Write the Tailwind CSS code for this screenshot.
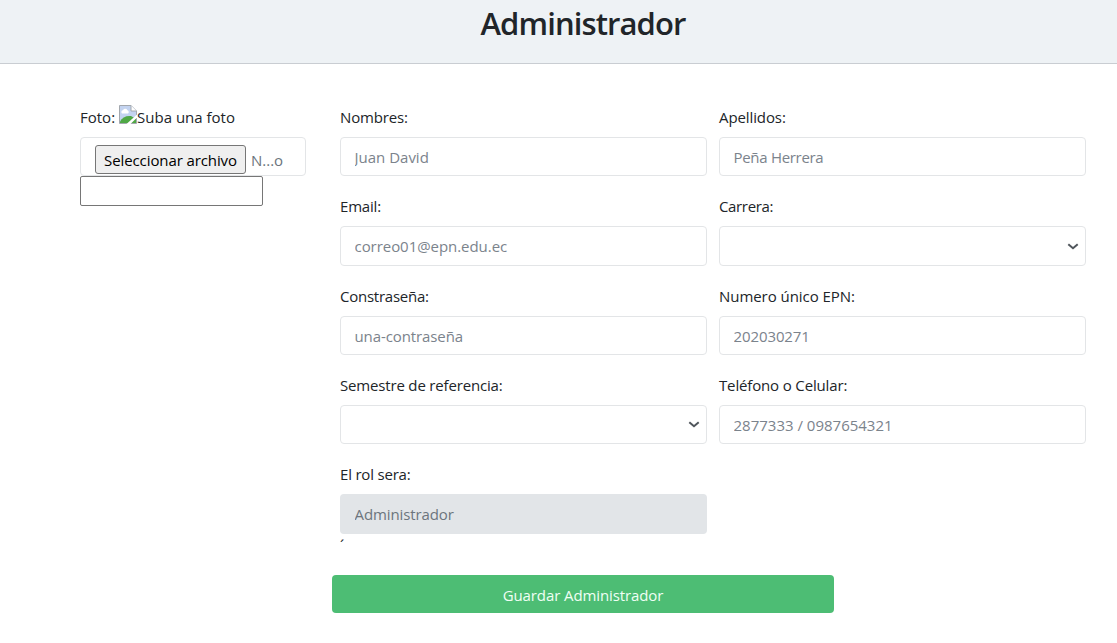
<!DOCTYPE html>
<html lang="es">
<head>
<meta charset="utf-8">
<title>Administrador</title>
<script src="https://cdn.jsdelivr.net/npm/@tailwindcss/browser@4"></script>
</head>
<body class="h-[643px] overflow-hidden bg-white font-['Open_Sans','Noto_Sans',sans-serif] text-[15px] leading-[23px] text-[#212529]">
<header class="flex h-16 justify-center border-b border-[#c9cdd2] bg-[#eef2f5] pl-[49px]">
  <h1 class="pt-[3px] text-[31px] leading-[40px] font-semibold tracking-[-0.9px]"><span>Administrador</span></h1>
</header>
<form>
  <div class="flex pt-[42px] pl-20">
    <section class="w-[226px] shrink-0">
      <div class="flex h-[31px]">
        <span class="mr-1">Foto:</span>
        <svg class="-mt-[1px] h-[19px] w-[18px]" viewBox="0 0 18 19">
          <path d="M.5 .5H12L17.500 6V18.500H.5Z" fill="#c3d3f0" stroke="#a3a8ae"/>
          <path d="M12 .5V6H17.500" fill="#fff" stroke="#a3a8ae"/>
          <path d="M3 8.500a1.800 1.800 0 0 1 1-3.200a2.400 2.400 0 0 1 4.400 0a1.800 1.800 0 0 1 .6 3.200Z" fill="#fff"/>
          <path d="M1 18V16.500C3 12.500 7 10.500 12 11L17 14V18Z" fill="#4fa845"/>
          <path d="M7.500 19L18 9.500V12.500L11.500 19Z" fill="#fff"/>
        </svg>
        <span>Suba una foto</span>
      </div>
      <div class="flex h-[39px] items-start rounded-[4px] border border-[#e3e5e7] pt-[7px] pl-[14px]">
        <button type="button" class="h-[29px] w-[151px] rounded-[3px] border border-[#767676] bg-[#efefef] pt-[2px] tracking-[-0.1px] whitespace-nowrap text-black">Seleccionar archivo</button>
        <span class="ml-[5px] pt-[4px] text-[#6c757d]">N...o</span>
      </div>
      <input type="text" class="block h-[30px] w-[183px] rounded-[2px] border border-[#767676]">
    </section>
    <section class="ml-[34px] grid w-[746px] auto-rows-[89.25px] grid-cols-2 gap-x-3">
      <label class="block"><span class="block h-[31px] tracking-[-0.15px]"><span>Nombres:</span></span>
        <input class="block h-[39.25px] w-full rounded-[4px] border border-[#e3e5e7] px-[13.5px] pt-[1px] placeholder:text-[#7b838c]" placeholder="Juan David"></label>
      <label class="block"><span class="block h-[31px] tracking-[-0.1px]"><span>Apellidos:</span></span>
        <input class="block h-[39.25px] w-full rounded-[4px] border border-[#e3e5e7] px-[13.5px] pt-[1px] tracking-[-0.3px] placeholder:text-[#7b838c]" placeholder="Peña Herrera"></label>
      <label class="block"><span class="block h-[31px] tracking-[-0.2px]"><span>Email:</span></span>
        <input class="block h-[39.25px] w-full rounded-[4px] border border-[#e3e5e7] px-[13.5px] pt-[1px] tracking-[-0.05px] placeholder:text-[#7b838c]" placeholder="correo01@epn.edu.ec"></label>
      <label class="block"><span class="block h-[31px] tracking-[-0.35px]"><span>Carrera:</span></span>
        <span class="flex h-[39.25px] items-center justify-end rounded-[4px] border border-[#e3e5e7] pt-px pr-[6px]"><svg class="h-[7px] w-[12px]" viewBox="0 0 12 7"><path d="M1.300 1.300L6 5.300L10.700 1.300" fill="none" stroke="#50565c" stroke-width="2"/></svg></span></label>
      <label class="block"><span class="block h-[31px] tracking-[-0.25px]"><span>Constraseña:</span></span>
        <input class="block h-[39.25px] w-full rounded-[4px] border border-[#e3e5e7] px-[13.5px] pt-[2px] tracking-[-0.1px] placeholder:text-[#7b838c]" placeholder="una-contraseña"></label>
      <label class="block"><span class="block h-[31px] tracking-[-0.05px]"><span>Numero único EPN:</span></span>
        <input class="block h-[39.25px] w-full rounded-[4px] border border-[#e3e5e7] px-[13.5px] pt-[2px] tracking-[-0.1px] placeholder:text-[#7b838c]" placeholder="202030271"></label>
      <label class="block"><span class="block h-[31px] tracking-[-0.17px]"><span>Semestre de referencia:</span></span>
        <span class="flex h-[39.25px] items-center justify-end rounded-[4px] border border-[#e3e5e7] pr-[6px]"><svg class="h-[7px] w-[12px]" viewBox="0 0 12 7"><path d="M1.300 1.300L6 5.300L10.700 1.300" fill="none" stroke="#50565c" stroke-width="2"/></svg></span></label>
      <label class="block"><span class="block h-[31px] tracking-[-0.15px]"><span>Teléfono o Celular:</span></span>
        <input class="block h-[39.25px] w-full rounded-[4px] border border-[#e3e5e7] px-[13.5px] pt-[2px] placeholder:text-[#7b838c]" placeholder="2877333 / 0987654321"></label>
      <div><span class="block h-[31px] tracking-[-0.2px]"><span>El rol sera:</span></span>
        <input disabled class="block h-[40px] w-full rounded-[4px] bg-[#e2e5e8] px-[14.5px] pb-px tracking-[-0.1px] placeholder:text-[#6c757d]" placeholder="Administrador">
        <div class="h-[23px]">´</div></div>
    </section>
  </div>
  <button type="button" class="mt-[22.75px] ml-[332px] block h-[38px] w-[502px] rounded-[4px] bg-[#4dbd74] pt-[2px] tracking-[-0.1px] text-[#f0fff4]">Guardar Administrador</button>
</form>
</body>
</html>
